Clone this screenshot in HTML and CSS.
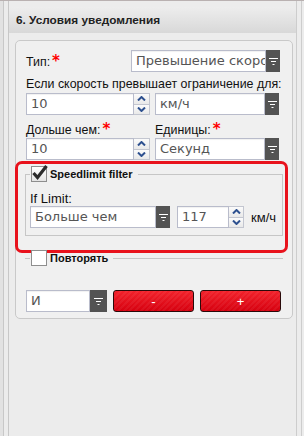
FILE: index.html
```html
<!DOCTYPE html>
<html lang="ru">
<head>
    <meta charset="UTF-8">
    <meta name="viewport" content="width=device-width, initial-scale=1.0">
    <title>Условия уведомления</title>
    <link rel="stylesheet" href="styles.css">
</head>
<body>
    <div class="frame">
        <div class="side"></div>

        <div class="panel">
            <div class="panel-head">6. Условия уведомления</div>

            <div class="box">
                <div class="type-row">
                    <span class="lbl">Тип:<span class="req">*</span></span>
                    <div class="combo type-combo">
                        <span class="combo-text">Превышение скорости</span>
                        <span class="combo-btn"><svg width="9" height="7" viewBox="0 0 9 7"><path d="M0 .5h9M2 3.5h5M3.5 6.5h2" stroke="#fff" stroke-width="1"/></svg></span>
                    </div>
                </div>

                <div class="lbl line">Если скорость превышает ограничение для:</div>
                <div class="pair">
                    <div class="spin">
                        <span class="spin-text">10</span>
                        <span class="spin-btns">
                            <span class="arrow"><svg width="9" height="5" viewBox="0 0 9 5"><path d="M1 4.5L4.5 1L8 4.5" fill="none" stroke="#2d508f" stroke-width="2"/></svg></span>
                            <span class="arrow"><svg width="9" height="5" viewBox="0 0 9 5"><path d="M1 .5L4.5 4L8 .5" fill="none" stroke="#2d508f" stroke-width="2"/></svg></span>
                        </span>
                    </div>
                    <div class="combo">
                        <span class="combo-text">км/ч</span>
                        <span class="combo-btn"><svg width="9" height="7" viewBox="0 0 9 7"><path d="M0 .5h9M2 3.5h5M3.5 6.5h2" stroke="#fff" stroke-width="1"/></svg></span>
                    </div>
                </div>

                <div class="pair labels">
                    <span class="lbl">Дольше чем:<span class="req">*</span></span>
                    <span class="lbl">Единицы:<span class="req">*</span></span>
                </div>
                <div class="pair">
                    <div class="spin">
                        <span class="spin-text">10</span>
                        <span class="spin-btns">
                            <span class="arrow"><svg width="9" height="5" viewBox="0 0 9 5"><path d="M1 4.5L4.5 1L8 4.5" fill="none" stroke="#2d508f" stroke-width="2"/></svg></span>
                            <span class="arrow"><svg width="9" height="5" viewBox="0 0 9 5"><path d="M1 .5L4.5 4L8 .5" fill="none" stroke="#2d508f" stroke-width="2"/></svg></span>
                        </span>
                    </div>
                    <div class="combo">
                        <span class="combo-text">Секунд</span>
                        <span class="combo-btn"><svg width="9" height="7" viewBox="0 0 9 7"><path d="M0 .5h9M2 3.5h5M3.5 6.5h2" stroke="#fff" stroke-width="1"/></svg></span>
                    </div>
                </div>

                <!-- red mark around the speed limit group -->
                <div class="highlight">
                    <fieldset class="group">
                        <legend>
                            <span class="check on"><svg width="16" height="16" viewBox="0 0 16 16"><path d="M2.5 8L6.5 12.5L15.5 1" fill="none" stroke="#2b2b2b" stroke-width="3.2"/></svg></span>
                            Speedlimit filter
                        </legend>
                        <div class="lbl small-line">If Limit:</div>
                        <div class="limit-row">
                            <div class="combo limit-combo">
                                <span class="combo-text">Больше чем</span>
                                <span class="combo-btn"><svg width="9" height="7" viewBox="0 0 9 7"><path d="M0 .5h9M2 3.5h5M3.5 6.5h2" stroke="#fff" stroke-width="1"/></svg></span>
                            </div>
                            <div class="spin limit-spin">
                                <span class="spin-text">117</span>
                                <span class="spin-btns">
                                    <span class="arrow"><svg width="9" height="5" viewBox="0 0 9 5"><path d="M1 4.5L4.5 1L8 4.5" fill="none" stroke="#2d508f" stroke-width="2"/></svg></span>
                                    <span class="arrow"><svg width="9" height="5" viewBox="0 0 9 5"><path d="M1 .5L4.5 4L8 .5" fill="none" stroke="#2d508f" stroke-width="2"/></svg></span>
                                </span>
                            </div>
                            <span class="lbl unit">км/ч</span>
                        </div>
                    </fieldset>
                </div>

                <fieldset class="group collapsed">
                    <legend><span class="check"></span>Повторять</legend>
                </fieldset>

                <div class="actions">
                    <div class="combo and-combo">
                        <span class="combo-text">И</span>
                        <span class="combo-btn"><svg width="9" height="7" viewBox="0 0 9 7"><path d="M0 .5h9M2 3.5h5M3.5 6.5h2" stroke="#fff" stroke-width="1"/></svg></span>
                    </div>
                    <button class="red-btn">-</button>
                    <button class="red-btn">+</button>
                </div>
            </div>
        </div>

        <div class="rail"></div>
    </div>
</body>
</html>
```

FILE: styles.css
```css
* {
    box-sizing: border-box;
}

body {
    margin: 0;
    background-color: #ececec;
    font-family: "Liberation Sans", Arial, sans-serif;
    font-size: 12.4px;
    color: #111;
}

.frame {
    display: flex;
    height: 436px;
    border-top: 1px solid #b9b1b1;
}

.side {
    width: 4px;
    background-color: #e2e2e2;
    border-right: 1px solid #c8c8c8;
    margin-right: 4px;
}

.panel {
    width: 289px;
    border-left: 1px solid #c8c8c8;
    border-right: 1px solid #cdcdcd;
    padding-top: 6px;
}

.rail {
    width: 3px;
    margin-left: 4px;
    border-left: 1px solid #cdcdcd;
}

.panel-head {
    height: 26px;
    padding-left: 7px;
    line-height: 26px;
    font-size: 11.8px;
    font-weight: bold;
    color: #222;
    background: linear-gradient(#ededed, #d8d8d8);
    border-radius: 3px 3px 0 0;
}

.box {
    margin: 7px 3px 0 6px;
    padding: 9px 12px 6px 10px;
    background-color: #f0f0f0;
    border: 1px solid #c9c9c9;
    border-radius: 5px;
}

.lbl {
    color: #111;
    white-space: nowrap;
}

.req {
    color: #f00;
    font-family: "DejaVu Sans", sans-serif;
    font-weight: bold;
    font-size: 15px;
    margin-left: 2px;
}

.type-row {
    display: flex;
    justify-content: space-between;
    align-items: center;
    height: 22px;
}

.line {
    margin-top: 4px;
    line-height: 16px;
}

.pair {
    display: grid;
    grid-template-columns: 124px 124px;
    column-gap: 5px;
    margin-top: 1px;
}

.pair.labels {
    margin-top: 7px;
    line-height: 15px;
}

.pair.labels + .pair {
    margin-top: 0;
}

/* inputs */
.combo,
.spin {
    display: flex;
    height: 22px;
}

.combo-text,
.spin-text {
    flex: 1;
    min-width: 0;
    overflow: hidden;
    white-space: nowrap;
    padding-left: 4px;
    line-height: 20px;
    font-family: "DejaVu Sans", sans-serif;
    font-size: 13px;
    color: #555;
    background-color: #fff;
    border: 1px solid #b9bccb;
    box-shadow: inset 0 1px 1px rgba(0, 0, 0, 0.06);
}

.combo-btn {
    width: 14px;
    display: flex;
    align-items: center;
    justify-content: center;
    background-color: #535353;
}

.type-combo {
    width: 149px;
}

.spin-btns {
    width: 16px;
    display: flex;
    flex-direction: column;
    border: 1px solid #c3c6d0;
    border-left: 0;
}

.arrow {
    flex: 1;
    display: flex;
    align-items: center;
    justify-content: center;
    background: linear-gradient(#fbfbfb, #e9e9e9);
}

.arrow + .arrow {
    border-top: 1px solid #c3c6d0;
}

/* speed limit group */
.highlight {
    margin: 4px -5px 0 -8px;
    padding: 2px 2px 14px 7px;
    outline: 3px solid #e8121c;
    border-radius: 4px;
}

.group {
    margin: 0;
    padding: 0 5px 7px 4px;
    border: 1px solid #c6c6c6;
    min-width: 0;
}

.group legend {
    display: flex;
    align-items: center;
    padding: 0 5px 0 1px;
    height: 16px;
    font-size: 11px;
    font-weight: bold;
    color: #111;
}

.check {
    width: 16px;
    height: 16px;
    margin-right: 3px;
    border: 1px solid #8e8e8e;
    background: linear-gradient(#ffffff, #e4e4e4);
    position: relative;
}

.check svg {
    position: absolute;
    left: -1px;
    top: -2px;
    overflow: visible;
}

.small-line {
    margin-top: 10px;
    line-height: 14px;
    font-size: 13px;
}

.limit-row {
    display: flex;
    align-items: center;
}

.limit-combo {
    width: 140px;
}

.limit-spin {
    width: 67px;
    margin-left: 7px;
}

.limit-spin .spin-btns {
    width: 15px;
}

.unit {
    margin-left: 7px;
    font-size: 13px;
}

.collapsed {
    border: 0;
    border-top: 1px solid #c6c6c6;
    margin: 0 -3px 0 -1px;
    padding: 0 0 0 5px;
}

.collapsed .check {
    background: #fff;
}

/* bottom row */
.actions {
    display: flex;
    gap: 6px;
    margin: 24px -2px 0 0;
}

.and-combo {
    width: 81px;
}

.and-combo .combo-btn {
    width: 17px;
}

.red-btn {
    width: 81px;
    height: 22px;
    padding: 0;
    color: #fff;
    font-family: "Liberation Sans", Arial, sans-serif;
    font-size: 13px;
    border: 1px solid #2a0a0a;
    border-radius: 3px;
    background:
        repeating-linear-gradient(135deg, rgba(255, 255, 255, 0.05) 0 2px, transparent 2px 4px),
        linear-gradient(#f2222b, #d6000f);
}
```
